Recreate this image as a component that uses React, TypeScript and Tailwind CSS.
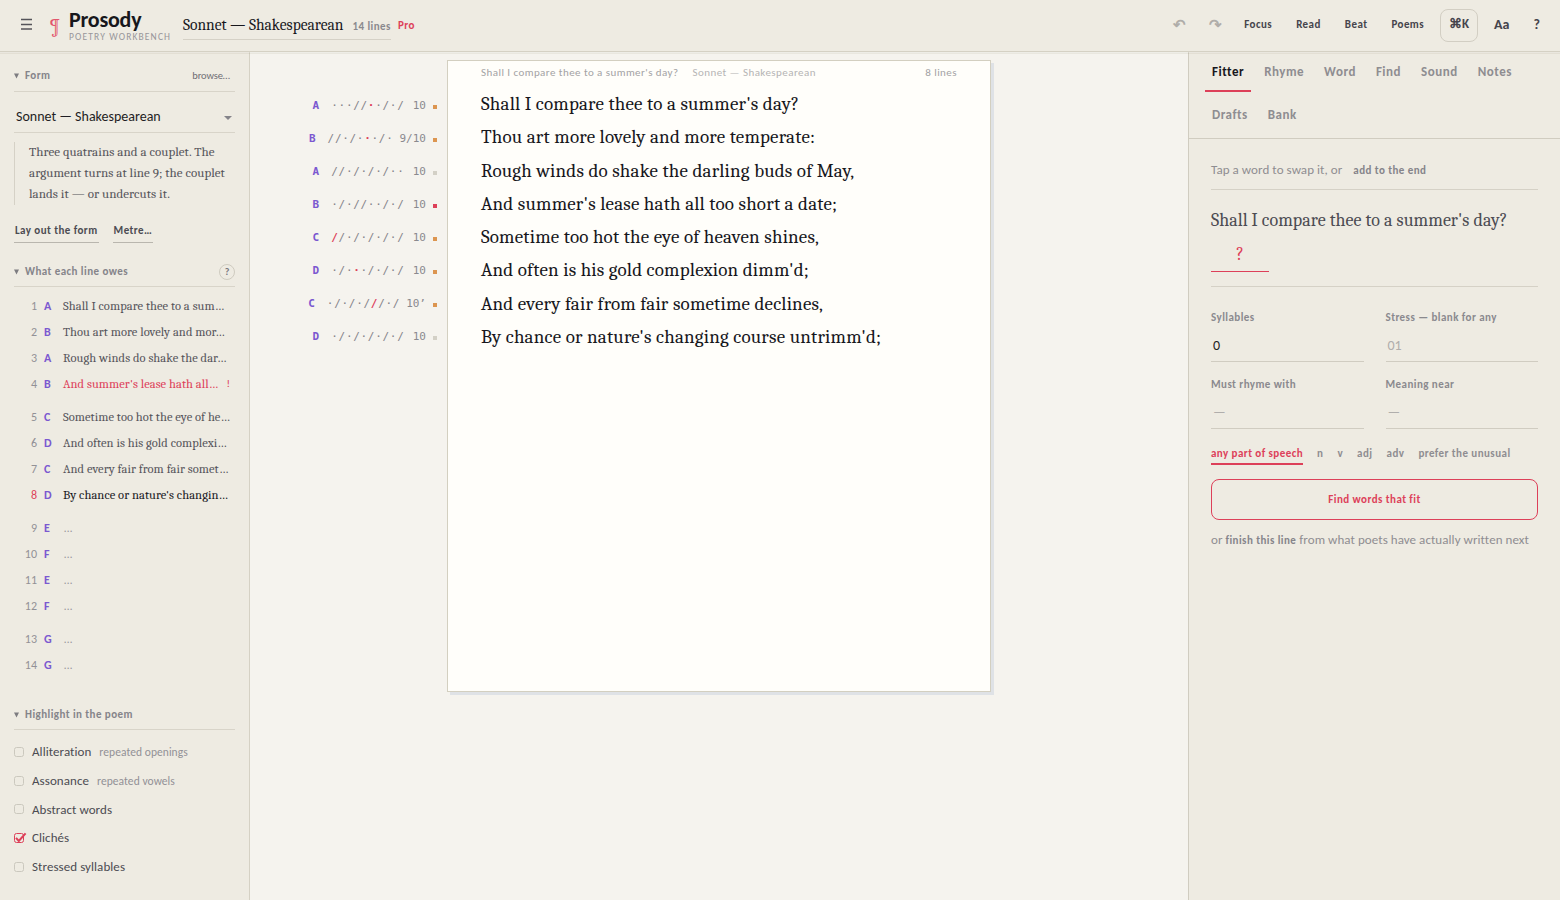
import React from "react";

const poem = [
  "Shall I compare thee to a summer's day?",
  "Thou art more lovely and more temperate:",
  "Rough winds do shake the darling buds of May,",
  "And summer's lease hath all too short a date;",
  "Sometime too hot the eye of heaven shines,",
  "And often is his gold complexion dimm'd;",
  "And every fair from fair sometime declines,",
  "By chance or nature's changing course untrimm'd;",
];

const ORANGE = "bg-[#dc9550]";
const GREY = "bg-[#d3d0c6]";
const RED = "bg-[#dd4059]";

const scansion = [
  { rhyme: "A", marks: "···//··/·/", off: 5, count: "10", flag: ORANGE },
  { rhyme: "B", marks: "//·/···/·", off: 5, count: "9/10", flag: ORANGE },
  { rhyme: "A", marks: "//·/·/·/··", off: -1, count: "10", flag: GREY },
  { rhyme: "B", marks: "·/·//··/·/", off: -1, count: "10", flag: RED },
  { rhyme: "C", marks: "//·/·/·/·/", off: 0, count: "10", flag: ORANGE },
  { rhyme: "D", marks: "·/···/·/·/", off: 3, count: "10", flag: ORANGE },
  { rhyme: "C", marks: "·/·/·///·/", off: 6, count: "10’", flag: ORANGE },
  { rhyme: "D", marks: "·/·/·/·/·/", off: -1, count: "10", flag: GREY },
];

const owed: [string, string][][] = [
  [
    ["A", "Shall I compare thee to a sum…"],
    ["B", "Thou art more lovely and mor…"],
    ["A", "Rough winds do shake the dar…"],
    ["B", "And summer's lease hath all…"],
  ],
  [
    ["C", "Sometime too hot the eye of he…"],
    ["D", "And often is his gold complexi…"],
    ["C", "And every fair from fair somet…"],
    ["D", "By chance or nature's changin…"],
  ],
  [["E", "…"], ["F", "…"], ["E", "…"], ["F", "…"]],
  [["G", "…"], ["G", "…"]],
];

const highlights = [
  { name: "Alliteration", hint: "repeated openings", on: false },
  { name: "Assonance", hint: "repeated vowels", on: false },
  { name: "Abstract words", hint: "", on: false },
  { name: "Clichés", hint: "", on: true },
  { name: "Stressed syllables", hint: "", on: false },
];

const serif = "font-['Caladea','Liberation_Serif',serif]";
const label = "text-[11px] font-bold tracking-[0.04em]";

function SectionHead({ title, className, children }: { title: string; className: string; children?: React.ReactNode }) {
  return (
    <div className={`flex items-center border-b border-[#d8d4c9] text-[#85848a] ${className}`}>
      <svg width="5" height="6" viewBox="0 0 5 6" className="mr-[6px] shrink-0">
        <path d="M0 .5h5L2.500 5.500z" fill="#7d7c80" />
      </svg>
      <span className={`${label} pt-[1px]`}>{title}</span>
      {children}
    </div>
  );
}

function Header() {
  return (
    <header className="relative z-10 flex h-[52px] shrink-0 items-center border-b border-[#d5d1c4] bg-[#eeebe2] pl-[20px] pr-[20px] shadow-[0_1px_0_rgba(255,255,255,0.25),0_2px_0_rgba(120,110,80,0.09)]">
      <svg width="12" height="12" viewBox="0 0 12 12" className="mb-[3px] ml-[1px] shrink-0">
        <path d="M0 1.500h11M0 6.500h11M0 11h11" stroke="#55545a" strokeWidth="1.300" />
      </svg>
      <span className={`${serif} ml-[16px] mt-[2px] w-[11px] text-[20px] leading-none text-[#e2566c]`}>¶</span>
      <div className="ml-[9px] flex w-[114px] flex-col">
        <span className="text-[22px] font-bold leading-[22px] tracking-[-0.01em] text-[#17171c]">Prosody</span>
        <span className="relative top-px whitespace-nowrap text-[9.5px] leading-[11px] tracking-[0.12em] text-[#98969a]">POETRY WORKBENCH</span>
      </div>
      <div className="mt-[-3px] flex h-[31px] items-center gap-[9px] border-b border-[#d5d1c6] pt-[3px]">
        <span className={`${serif} text-[15.5px] leading-5 text-[#17171c]`}>Sonnet — Shakespearean</span>
        <span className={`${label} mt-[4px] text-[#8a898e]`}>14 lines</span>
      </div>
      <span className={`${label} ml-[7px] mt-[1px] text-[#dd4059]`}>Pro</span>
      <nav className={`${label} ml-auto flex h-full items-center text-[#45444c]`}>
        <span className="mb-[1px] flex w-[12px] justify-center text-[15px] leading-none tracking-normal text-[#b0ada9]">↶</span>
        <span className="mb-[1px] ml-[24px] flex w-[12px] justify-center text-[15px] leading-none tracking-normal text-[#b0ada9]">↷</span>
        <span className="ml-[23px] mb-[1px]">Focus</span>
        <span className="ml-[24px] mb-[1px]">Read</span>
        <span className="ml-[24px] mb-[1px]">Beat</span>
        <span className="ml-[24px] mb-[1px]">Poems</span>
        <span className="ml-[16px] flex h-[33px] w-[38px] items-center justify-center rounded-[8px] border border-[#d2cec3] pb-[3px] text-[13px] tracking-normal">⌘K</span>
        <span className="ml-[16px] mb-[2px] text-[14px] tracking-normal">Aa</span>
        <span className="ml-[24px] mb-[2px] text-[14px] tracking-normal">?</span>
      </nav>
    </header>
  );
}

function LeftPanel() {
  let n = 0;
  return (
    <aside className="flex w-[250px] shrink-0 flex-col border-r border-[#d5d1c4] bg-[#eeebe2] pl-[14px] pr-[14px]">
      <SectionHead title="Form" className="h-[40px] pt-[8px]">
        <span className="ml-auto mr-[5px] pt-[1px] text-[10.5px] font-normal tracking-[-0.01em] text-[#6f6e74]">browse…</span>
      </SectionHead>
      <div className="flex h-[41px] items-center justify-between border-b border-[#d8d4c9] pl-[2px] pr-[3px] pt-[9px]">
        <span className="text-[14px] text-[#1f1e24]">Sonnet — Shakespearean</span>
        <svg width="8" height="4" viewBox="0 0 8 4" className="mt-[3px]"><path d="M0 0h8L4 4z" fill="#85848a" /></svg>
      </div>
      <div className="mt-[9px] flex h-[63px] border-l border-[#d5d1c6] pl-[14px]">
        <p className={`${serif} mt-[-1px] whitespace-nowrap text-[13px] leading-[21px] tracking-[0.045px] text-[#55545a]`}>
          Three quatrains and a couplet. The<br />argument turns at line 9; the couplet<br />lands it — or undercuts it.
        </p>
      </div>
      <div className={`${label} mt-[13px] flex h-[25px] gap-[14px] text-[#4c4b52]`}>
        <span className="flex items-center border-b border-[#b9b6ae] px-[1px] pt-[2px]">Lay out the form</span>
        <span className="flex items-center border-b border-[#b9b6ae] px-[1px] pt-[2px]">Metre…</span>
      </div>
      <SectionHead title="What each line owes" className="h-[44px] pt-[14px]">
        <span className="ml-auto flex h-[16px] w-[16px] items-center justify-center rounded-full border border-[#cfcbc0] text-[10px] font-bold text-[#77767c]">?</span>
      </SectionHead>
      <div className="flex flex-col gap-[7px] pt-[6px]">
        {owed.map((group, g) => (
          <div key={g}>
            {group.map(([rhyme, text], i) => {
              n += 1;
              const bad = n === 4;
              const now = n === 8;
              const tone = bad ? "text-[#dd4059]" : now ? "text-[#17171c]" : text === "…" ? "text-[#98969a]" : "text-[#55545a]";
              return (
                <div key={i} className="flex h-[26px] items-center">
                  <span className={`w-[23px] text-right text-[12px] ${now ? "text-[#dd4059]" : "text-[#929196]"}`}>{n}</span>
                  <span className="ml-[7px] w-[19px] text-[12px] font-bold text-[#7b58d0]">{rhyme}</span>
                  <span className={`${serif} whitespace-nowrap text-[12.5px] tracking-[0.065px] ${tone}`}>{text}</span>
                  {bad && <span className="ml-auto mr-[5px] text-[11px] text-[#dd4059]">!</span>}
                </div>
              );
            })}
          </div>
        ))}
      </div>
      <SectionHead title="Highlight in the poem" className="h-[52px] pt-[22px]" />
      <div className="pt-[7.5px] tracking-[0.065px]">
        {highlights.map((h) => (
          <div key={h.name} className="flex h-[28.75px] items-center">
            <svg width="13" height="12" viewBox="0 0 13 12" className="mr-[5px] shrink-0">
              <rect x=".5" y="1.500" width="9" height="9" rx="2" fill="none" stroke={h.on ? "#dd4059" : "#cbc8be"} />
              {h.on && <path d="M2 5.800l2.800 3.200L11.600 1.300" fill="none" stroke="#dd4059" strokeWidth="2" />}
            </svg>
            <span className="text-[13px] text-[#4c4b52]">{h.name}</span>
            {h.hint && <span className="ml-[8px] pt-[1px] text-[11.5px] text-[#929196]">{h.hint}</span>}
          </div>
        ))}
      </div>
    </aside>
  );
}

function Editor() {
  return (
    <main className="flex min-w-0 flex-1 bg-[#f5f3ee]">
      <div className="w-[197px] shrink-0 pt-[37px] font-['DejaVu_Sans_Mono',monospace] text-[11px]">
        {scansion.map((s, i) => (
          <div key={i} className="flex h-[33.05px] items-center justify-end pr-[10px] leading-none">
            <span className="mr-[12px] font-bold text-[#7b58d0]">{s.rhyme}</span>
            <span className="mr-[6px] tracking-[0.7px] text-[#85848a]">
              {s.marks.split("").map((m, k) => (
                <span key={k} className={k === s.off ? "font-bold text-[#dd4059]" : ""}>{m}</span>
              ))}
            </span>
            <span className="min-w-[15.5px] text-right text-[#8a898e]">{s.count}</span>
            <span className={`ml-[7px] mt-[3px] h-[4px] w-[4px] ${s.flag}`} />
          </div>
        ))}
      </div>
      <article className="mt-[8px] h-[632px] w-[544px] shrink-0 border border-[#d3cfc0] bg-[#fffefa] px-[33px] shadow-[3px_3px_0_#dfe2e6]">
        <div className="flex h-[27px] items-center pb-[2px] text-[11px] tracking-[0.04em] text-[#a3a2a4]">
          <span>Shall I compare thee to a summer's day?</span>
          <span className="ml-[14px] text-[#b5b4b4]">Sonnet — Shakespearean</span>
          <span className="ml-auto">8 lines</span>
        </div>
        <div className={`${serif} whitespace-nowrap text-[19px] leading-[33.25px] tracking-[0.01em] text-[#17171c]`}>
          {poem.map((line) => <div key={line}>{line}</div>)}
        </div>
      </article>
    </main>
  );
}

const tabs = ["Fitter", "Rhyme", "Word", "Find", "Sound", "Notes", "Drafts", "Bank"];
const fields = [
  { name: "Syllables", value: "0", filled: true },
  { name: "Stress — blank for any", value: "01", filled: false },
  { name: "Must rhyme with", value: "—", filled: false },
  { name: "Meaning near", value: "—", filled: false },
];

function RightPanel() {
  return (
    <aside className="w-[372px] shrink-0 border-l border-[#d0ccc0] bg-[#eeebe2]">
      <div className="flex flex-wrap gap-x-[6px] gap-y-[3px] border-b border-[#d0ccc0] px-[16px] pb-[3px] text-[13px] font-bold tracking-[0.04em] text-[#8e8d91]">
        {tabs.map((t, i) => (
          <span key={t} className={`flex h-[40px] items-center border-b-2 px-[7px] pt-[2px] ${i === 0 ? "border-[#dd4059] text-[#17171c]" : "border-transparent"}`}>{t}</span>
        ))}
      </div>
      <div className="px-[22px]">
        <div className="flex h-[51px] items-center border-b border-[#d5d1c6] pt-[12px] text-[13px] tracking-[0.065px] text-[#8e8d91]">
          Tap a word to swap it, or<span className={`${label} ml-[11px] pt-[2px] text-[#85848a]`}>add to the end</span>
        </div>
        <div className={`${serif} h-[97px] border-b border-[#d5d1c6] pt-[14px] text-[18px] leading-[34px] tracking-[0.05px] text-[#4c4b52]`}>
          <div className="whitespace-nowrap">Shall I compare thee to a summer's day?</div>
          <div className="flex h-[34px] w-[58px] justify-center border-b border-b-[#dd4059] text-[#dd4059]">?</div>
        </div>
        <div className="grid grid-cols-2 gap-x-[22px] gap-y-[14px] pt-[22px]">
          {fields.map((f) => (
            <div key={f.name}>
              <div className={`${label} h-[16px] leading-[18px] text-[#8a898e]`}>{f.name}</div>
              <div className={`flex h-[37px] items-center border-b border-[#d0ccc1] pl-[2px] pt-[5px] text-[14px] ${f.filled ? "text-[#1f1e24]" : "text-[#b0aeac]"}`}>{f.value}</div>
            </div>
          ))}
        </div>
        <div className={`${label} mt-[16px] flex h-[20px] gap-[14px] text-[#8e8d91]`}>
          <span className="border-b-2 border-[#dd4059] leading-[17px] text-[#dd4059]">any part of speech</span>
          {["n", "v", "adj", "adv", "prefer the unusual"].map((t) => (
            <span key={t} className="leading-[17px]">{t}</span>
          ))}
        </div>
        <button className={`${label} mt-[14px] flex h-[41px] w-full items-center justify-center rounded-[8px] border border-[#dd4059] pt-[2px] text-[#dd4059]`}>Find words that fit</button>
        <p className="mt-[10px] whitespace-nowrap text-[13px] leading-[20px] tracking-[0.065px] text-[#8e8d91]">
          or <span className={`${label} text-[#85848a]`}>finish this line</span> from what poets have actually written next
        </p>
      </div>
    </aside>
  );
}

export default function App() {
  return (
    <div className="flex h-[900px] w-[1560px] flex-col overflow-hidden font-['Carlito','Lato',sans-serif] leading-normal">
      <Header />
      <div className="flex min-h-0 flex-1">
        <LeftPanel />
        <Editor />
        <RightPanel />
      </div>
    </div>
  );
}
